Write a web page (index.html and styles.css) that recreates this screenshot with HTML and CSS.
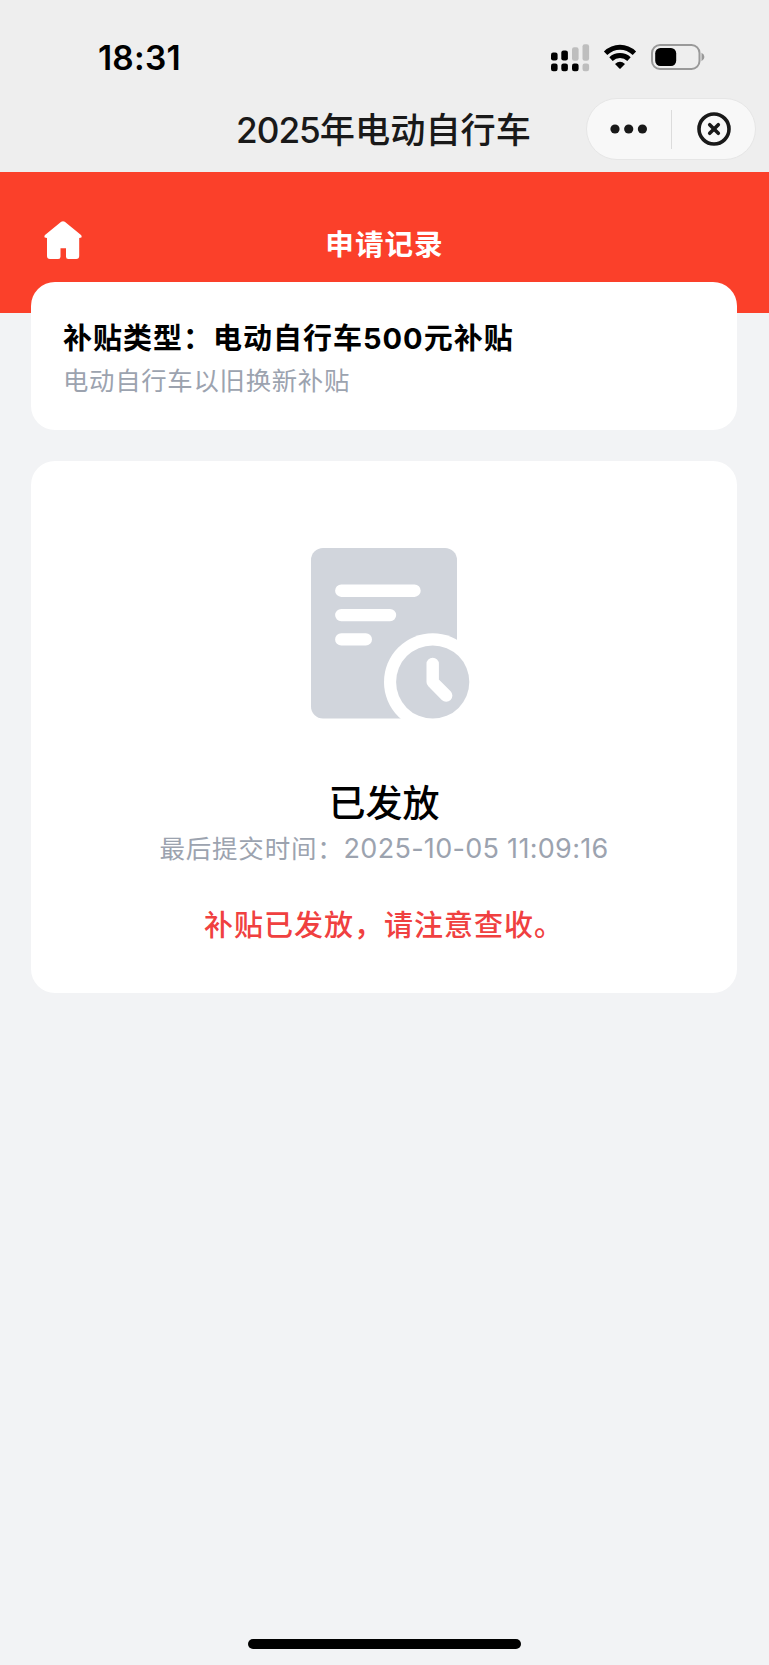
FILE: index.html
```
<!DOCTYPE html>
<html lang="zh-CN">

<head>
    <meta charset="UTF-8">
    <meta name="viewport" content="width=device-width, initial-scale=1.0">
    <title>申请记录</title>
    <link rel="stylesheet" href="styles.css">
</head>

<body>
    <div class="page">
        <div class="status-bar">
            <span class="time">18:31</span>
            <div class="status-icons">
                <svg class="signal" width="40" height="28" viewBox="0 0 40 28">
                    <rect x="1" y="8.5" width="6.6" height="8" rx="2.2" />
                    <rect x="11.3" y="6.5" width="6.6" height="10" rx="2.2" />
                    <rect class="off" x="22" y="3.3" width="6.6" height="13.4" rx="2.2" />
                    <rect class="off" x="32.5" y="0.3" width="6.6" height="16.4" rx="2.2" />
                    <rect x="1" y="19.5" width="6.6" height="7.8" rx="2.2" />
                    <rect x="11.3" y="19.5" width="6.6" height="7.8" rx="2.2" />
                    <rect x="22" y="19.5" width="6.6" height="7.8" rx="2.2" />
                    <rect class="off" x="32.5" y="19.5" width="6.6" height="7.8" rx="2.2" />
                </svg>
                <svg class="wifi" width="34" height="26" viewBox="0 0 34 26">
                    <path d="M2.6 9.2Q9 3.2 17 3.2T31.4 9.2" />
                    <path d="M8 15.1Q11.8 11.6 17 11.6T26 15.1" />
                    <path class="dot" d="M12 20Q17 15.6 22 20L17.6 24.5Q17 25 16.4 24.5Z" />
                </svg>
                <svg class="battery" width="54" height="26" viewBox="0 0 54 26">
                    <rect class="shell" x="1" y="1" width="47.5" height="24" rx="8" />
                    <rect x="4.2" y="4" width="21" height="18" rx="5.2" />
                    <path class="cap" d="M50.5 8.8Q53.4 10.2 53.4 13T50.5 17.2Z" />
                </svg>
            </div>
        </div>

        <div class="nav-bar">
            <div class="nav-title"><span class="num">2025</span>年电动自行车</div>
            <div class="capsule">
                <svg class="more" width="38" height="10" viewBox="0 0 38 10">
                    <circle cx="5" cy="5" r="4.6" />
                    <circle cx="18.7" cy="5" r="4.6" />
                    <circle cx="32.4" cy="5" r="4.6" />
                </svg>
                <span class="divider"></span>
                <svg class="close" width="34" height="34" viewBox="0 0 34 34">
                    <circle cx="17" cy="17" r="15" />
                    <path d="M12.7 12.7L21.3 21.3M21.3 12.7L12.7 21.3" />
                </svg>
            </div>
        </div>

        <div class="header">
            <svg class="home" width="38" height="38" viewBox="0 0 38 38">
                <path d="M17.2 0.8Q19 -0.5 20.8 0.8L37 14Q38 15 37.4 16.6L35.2 17V35Q35.2 38 32.2 38H24.3Q22 38 22 35.8V27.3H16.5V35.8Q16.5 38 14.2 38H6Q3 38 3 35V17L0.7 16.6Q0 15 1 14Z" />
            </svg>
            <h1 class="header-title">申请记录</h1>
        </div>

        <div class="content">
            <div class="card type-card">
                <h2 class="type-title">补贴类型：电动自行车<span class="num">500</span>元补贴</h2>
                <p class="type-desc">电动自行车以旧换新补贴</p>
            </div>

            <div class="card result-card">
                <svg class="record" width="159" height="171" viewBox="0 0 159 171">
                    <rect class="fill" width="146" height="170.5" rx="12" />
                    <path class="line" d="M30.3 42.7H103.5M30.3 67.1H79M30.3 91.4H54.8" />
                    <circle class="ring" cx="121.7" cy="134" r="48.7" />
                    <circle class="fill" cx="121.7" cy="134" r="36.6" />
                    <path class="line" d="M121.7 116V134L135.2 147.6" />
                </svg>
                <div class="result">已发放</div>
                <div class="submit-time">最后提交时间：<span class="num">2025-10-05 11:09:16</span></div>
                <div class="notice">补贴已发放，请注意查收。</div>
            </div>
        </div>

        <div class="home-indicator"></div>
    </div>
</body>

</html>
```
FILE: styles.css
```
* {
    box-sizing: border-box;
}

body {
    margin: 0;
    background-color: #f2f3f5;
    font-family: "Noto Sans CJK SC", sans-serif;
    color: #000;
}

h1,
h2,
p {
    margin: 0;
}

svg {
    display: block;
}

.num {
    font-family: Inter, sans-serif;
}

.page {
    display: flex;
    flex-direction: column;
    height: 1665px;
}

/* status bar */
.status-bar {
    display: flex;
    justify-content: space-between;
    height: 98px;
    padding: 38px 64px 0 98px;
    background-color: #eee;
}

.time {
    font-family: Inter, sans-serif;
    font-size: 33.5px;
    font-weight: 600;
    line-height: 40px;
    letter-spacing: 0.2px;
}

.status-icons {
    display: flex;
    align-items: flex-start;
    padding-top: 6px;
}

.signal .off {
    fill: #bebebe;
}

.wifi {
    margin-left: 13px;
}

.wifi path {
    fill: none;
    stroke: #000;
    stroke-width: 5;
}

.wifi .dot {
    fill: #000;
    stroke: none;
}

.battery {
    margin-left: 14px;
}

.battery .shell {
    fill: none;
    stroke: #999;
    stroke-width: 2;
}

.battery .cap {
    fill: #999;
}

/* mini program navigation */
.nav-bar {
    display: grid;
    grid-template-columns: 1fr auto 1fr;
    height: 74px;
    padding-right: 13px;
    background-color: #eee;
}

.nav-title {
    grid-column: 2;
    margin-left: 11px;
    font-size: 35.2px;
    font-weight: 500;
    line-height: 60px;
    color: #191919;
}

.nav-title .num {
    letter-spacing: -1px;
}

.capsule {
    display: flex;
    align-items: center;
    justify-self: end;
    width: 170px;
    height: 62px;
    padding-left: 23px;
    border: 1px solid #e6e6e6;
    border-radius: 31px;
    background-color: #f8f8f8;
}

.more {
    fill: #191919;
}

.divider {
    width: 1px;
    height: 39px;
    margin: 0 25px 0 23px;
    background-color: #dcdcdc;
}

.close {
    fill: none;
    stroke: #191919;
    stroke-width: 3.6;
    stroke-linecap: round;
}

/* red header */
.header {
    display: grid;
    grid-template-columns: 1fr auto 1fr;
    align-items: start;
    height: 141px;
    padding: 49px 44px 0;
    background-color: #fb402a;
}

.home {
    fill: #fff;
}

.header-title {
    font-size: 28.6px;
    font-weight: 700;
    line-height: 44px;
    letter-spacing: 1px;
    color: #fff;
}

/* cards */
.content {
    display: flex;
    flex-direction: column;
    gap: 31px;
    flex: 1;
    margin-top: -31px;
    padding: 0 32px 0 31px;
}

.card {
    border-radius: 24px;
    background-color: #fff;
}

.type-card {
    height: 148px;
    padding: 33px 32px 0;
}

.type-title {
    font-size: 29px;
    font-weight: 700;
    line-height: 42px;
    letter-spacing: 1px;
}

.type-desc {
    font-size: 25.4px;
    line-height: 38px;
    letter-spacing: 0.7px;
    color: #9ca3af;
}

.result-card {
    display: flex;
    flex-direction: column;
    align-items: center;
    height: 532px;
    padding-top: 87px;
}

.record {
    margin-left: 13px;
}

.record .fill {
    fill: #d1d5dc;
}

.record .ring {
    fill: #fff;
}

.record .line {
    fill: none;
    stroke: #fff;
    stroke-width: 12.4;
    stroke-linecap: round;
    stroke-linejoin: round;
}

.result {
    margin-top: 55px;
    font-size: 37px;
    font-weight: 500;
    line-height: 54px;
}

.submit-time {
    font-size: 25.5px;
    line-height: 38px;
    letter-spacing: 0.8px;
    color: #9ca3af;
}

.submit-time .num {
    font-size: 27px;
    letter-spacing: 0.3px;
}

.notice {
    margin-top: 33px;
    font-size: 29px;
    font-weight: 500;
    line-height: 44px;
    letter-spacing: 1px;
    color: #f04040;
}

.home-indicator {
    width: 273px;
    height: 10px;
    margin: 0 248px 16px;
    border-radius: 5px;
    background-color: #000;
}
```
